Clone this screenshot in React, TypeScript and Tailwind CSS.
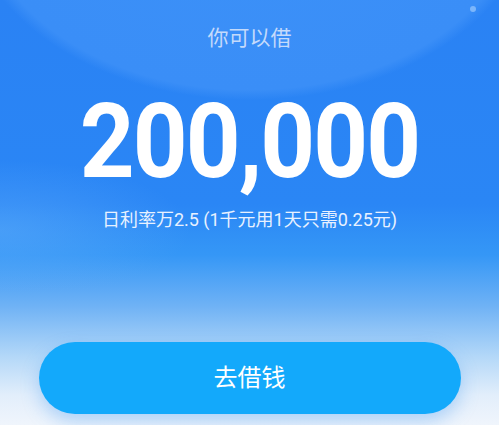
import React from "react";

export default function App() {
  return (
    <div
      className="relative flex h-[425px] w-full flex-col items-center overflow-hidden bg-[radial-gradient(285px_200px_at_50%_-100px,#3c91f8_0%,#3a8ef7_95%,rgba(58,142,247,0)_100%),radial-gradient(190px_70px_at_0px_230px,rgba(95,172,250,0.5)_0%,rgba(95,172,250,0)_100%),linear-gradient(180deg,#2a82f4_0%,#2a86f5_48%,#3597f6_60%,#6fb2f5_72%,#b4d8f8_84%,#e2eefb_93%,#f0f5fc_100%)] font-['Roboto','Noto_Sans_CJK_SC',sans-serif]"
    >
      <div className="absolute right-[23px] top-[6px] h-[6px] w-[6px] rounded-full bg-[#7cb6fb]" />

      <div className="pt-[25px] text-[21px] leading-[26px] text-[#c4dafb]">你可以借</div>

      <div className="mt-[39px] scale-x-[0.92] text-[104px] font-bold leading-[104px] tracking-[-0.02em] text-white">
        200,000
      </div>

      <div className="mt-[15px] text-[18px] leading-[22px] text-[#e8f1ff]">
        日利率万2.5 (1千元用1天只需0.25元)
      </div>

      <button className="mt-[111px] flex h-[72px] w-[422px] items-center justify-center rounded-full bg-[#13a9fb] text-[24px] text-white shadow-[0_8px_18px_rgba(60,150,240,0.35)]">
        去借钱
      </button>
    </div>
  );
}
